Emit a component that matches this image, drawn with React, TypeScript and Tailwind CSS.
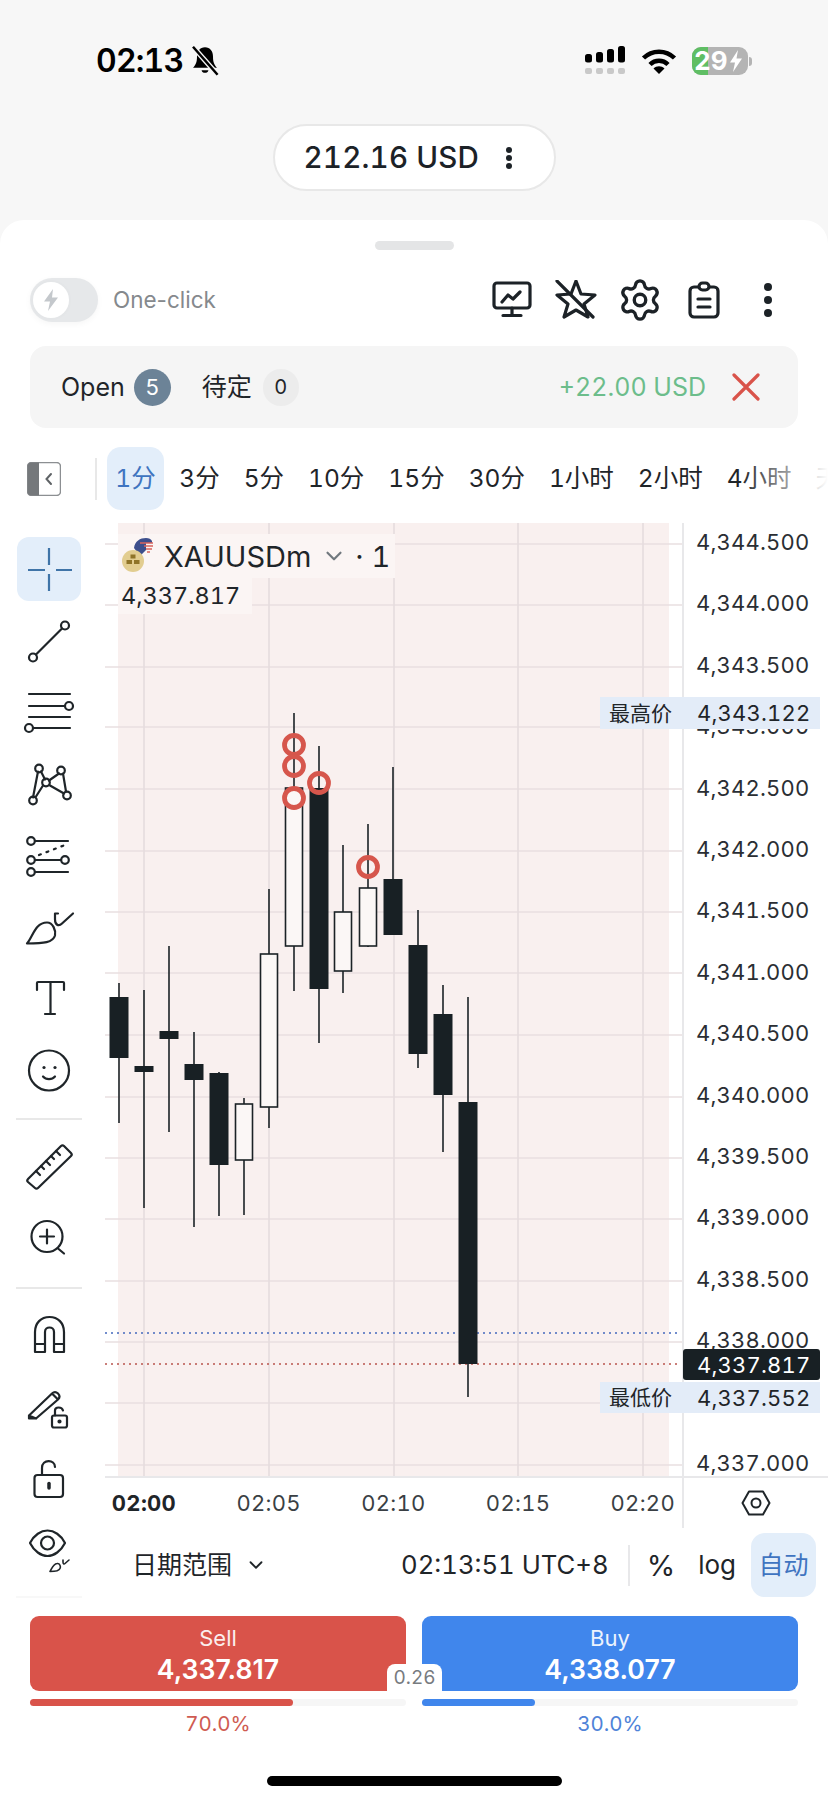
import React from "react";
import { Settings, ChevronDown } from "lucide-react";

const TICKS = ["4,344.500","4,344.000","4,343.500","4,343.000","4,342.500","4,342.000","4,341.500","4,341.000","4,340.500","4,340.000","4,339.500","4,339.000","4,338.500","4,338.000","4,337.500","4,337.000"];
const TABS = ["3分","5分","10分","15分","30分","1小时","2小时","4小时","天"];

type C = { x: number; wt: number; wb: number; bt: number; bb: number; s: boolean };
const CANDLES: C[] = [
  { x: 119, wt: 983, wb: 1123, bt: 997, bb: 1058, s: true },
  { x: 144, wt: 990, wb: 1208, bt: 1066, bb: 1072, s: true },
  { x: 169, wt: 946, wb: 1132, bt: 1031, bb: 1039, s: true },
  { x: 194, wt: 1032, wb: 1227, bt: 1064, bb: 1080, s: true },
  { x: 219, wt: 1072, wb: 1216, bt: 1073, bb: 1165, s: true },
  { x: 244, wt: 1098, wb: 1215, bt: 1104, bb: 1160, s: false },
  { x: 269, wt: 889, wb: 1128, bt: 954, bb: 1107, s: false },
  { x: 294, wt: 713, wb: 991, bt: 788, bb: 946, s: false },
  { x: 319, wt: 746, wb: 1043, bt: 788, bb: 989, s: true },
  { x: 343, wt: 845, wb: 993, bt: 912, bb: 971, s: false },
  { x: 368, wt: 824, wb: 947, bt: 888, bb: 946, s: false },
  { x: 393, wt: 767, wb: 935, bt: 879, bb: 935, s: true },
  { x: 418, wt: 910, wb: 1068, bt: 945, bb: 1054, s: true },
  { x: 443, wt: 985, wb: 1152, bt: 1014, bb: 1095, s: true },
  { x: 468, wt: 997, wb: 1397, bt: 1102, bb: 1364, s: true },
];
const HLINES = [544, 605, 667, 727, 789, 851, 912, 973, 1035, 1097, 1158, 1219, 1281, 1342, 1403, 1465];
const VLINES = [144, 269, 394, 518, 643];
const MARKS: [number, number][] = [[294, 745], [294, 766], [294, 798], [319, 783], [368, 867]];

function Chart() {
  return (
    <svg width="577" height="953" viewBox="105 523 577 953" className="block">
      <rect x="118" y="523" width="551" height="953" fill="#f9f0ef" />
      {HLINES.map((y) => <line key={y} x1="105" x2="682" y1={y} y2={y} stroke="#e8dfe0" strokeWidth="1.5" />)}
      {VLINES.map((x) => <line key={x} x1={x} x2={x} y1="523" y2="1476" stroke="#e5dcde" strokeWidth="1.6" />)}
      <line x1="105" x2="677" y1="1333" y2="1333" stroke="#4468bd" strokeWidth="1.4" strokeDasharray="2 4" />
      <line x1="105" x2="677" y1="1364" y2="1364" stroke="#b9544e" strokeWidth="1.4" strokeDasharray="2 4" />
      {CANDLES.map((c) => (
        <g key={c.x}>
          <line x1={c.x} x2={c.x} y1={c.wt} y2={c.wb} stroke="#1b2226" strokeWidth="1.6" />
          {c.s
            ? <rect x={c.x - 9.5} y={c.bt} width="19" height={c.bb - c.bt} fill="#182024" />
            : <rect x={c.x - 8.5} y={c.bt} width="17" height={c.bb - c.bt} fill="#fbf7f6" stroke="#1b2226" strokeWidth="1.6" />}
        </g>
      ))}
      {MARKS.map(([x, y]) => <circle key={`${x}-${y}`} cx={x} cy={y} r="9.5" fill="none" stroke="#d6564c" strokeWidth="4.8" />)}
    </svg>
  );
}

function Ico({ cy, children }: { cy: number; children: React.ReactNode }) {
  return (
    <svg width="64" height="64" viewBox={`17 ${cy - 32} 64 64`} fill="none" stroke="#1f2529" strokeWidth="2.2" strokeLinecap="round" strokeLinejoin="round" className="block overflow-visible">
      {children}
    </svg>
  );
}

function Slot({ children }: { children: React.ReactNode }) {
  return <div className="flex h-[71.5px] w-full items-center justify-center">{children}</div>;
}

function Sep() {
  return <div className="my-[12px] h-[2px] w-[66px] bg-[#e8e8e8]" />;
}

function Sidebar() {
  return (
    <div className="flex w-[98px] flex-col items-center pt-[10.5px]">
      <Slot>
        <div className="flex h-[64px] w-[64px] items-center justify-center rounded-[12px] bg-[#e3eefa]">
          <svg width="64" height="64" viewBox="17 537 64 64" fill="none" stroke="#3f74a8" strokeWidth="2.2" className="block">
            <path d="M49 548V565M49 574V591M28 570H45M56 570H72" />
          </svg>
        </div>
      </Slot>
      <Slot>
        <Ico cy={640.5}>
          <circle cx="33" cy="657" r="4" /><circle cx="65" cy="625" r="4" /><path d="M36 654L62 628" />
        </Ico>
      </Slot>
      <Slot>
        <Ico cy={712}>
          <path d="M29 694H70M29 706H65M29 717H70M33 728H70" /><circle cx="69" cy="706" r="4" /><circle cx="29" cy="728" r="4" />
        </Ico>
      </Slot>
      <Slot>
        <Ico cy={783.5}>
          <path d="M33 797L38 771M41 771L45 779M49 780L59 773M63 773L66 791M64 793L50 785M43 785L36 796" />
          <circle cx="39" cy="768" r="3.8" /><circle cx="61" cy="770" r="3.8" /><circle cx="46" cy="782" r="3.8" /><circle cx="33" cy="800" r="3.8" /><circle cx="67" cy="795" r="3.8" />
        </Ico>
      </Slot>
      <Slot>
        <Ico cy={855}>
          <path d="M35 841H68M35 860H61M35 872H68" /><circle cx="31" cy="841" r="3.8" /><circle cx="31" cy="860" r="3.8" /><circle cx="65" cy="860" r="3.8" /><circle cx="31" cy="872" r="3.8" />
          <path d="M39 855L65 845" strokeDasharray="2 6" />
        </Ico>
      </Slot>
      <Slot>
        <Ico cy={926.5}>
          <path d="M27 943C33 936 35 922 47 922C53 922 56 930 55 935C53 942 44 943 27 943Z" />
          <path d="M58 913H55V919C55 925 59 926 62 923L73 913" />
        </Ico>
      </Slot>
      <Slot>
        <Ico cy={998}>
          <path d="M37 990V983C37 982 37 982 38 982H63C64 982 64 982 64 983V990M50.5 982V1014M45 1014H55" />
        </Ico>
      </Slot>
      <Slot>
        <Ico cy={1069.5}>
          <circle cx="49" cy="1070" r="20" /><path d="M43 1076C46 1079.5 52 1079.5 55 1076" />
          <circle cx="44" cy="1067" r="1.6" fill="#1f2529" stroke="none" /><circle cx="55" cy="1067" r="1.6" fill="#1f2529" stroke="none" />
        </Ico>
      </Slot>
      <Sep />
      <Slot>
        <Ico cy={1166}>
          <path d="M28 1178L61 1145C62 1144 63 1144 64 1145L71 1152C72 1153 72 1154 71 1155L38 1187C37 1188 36 1188 35 1187L28 1181C27 1180 27 1179 28 1178Z" />
          <path d="M36 1170L40 1174M41 1165L44 1168M46 1160L50 1164M51 1155L54 1158M56 1150L60 1154" />
        </Ico>
      </Slot>
      <Slot>
        <Ico cy={1237.5}>
          <circle cx="47" cy="1235" r="15.5" /><path d="M58 1247L64 1252M47 1228V1242M40 1235H54" />
        </Ico>
      </Slot>
      <Sep />
      <Slot>
        <Ico cy={1334}>
          <path d="M35 1350V1330C35 1321 41 1315 49.5 1315C58 1315 64 1321 64 1330V1350H54V1330C54 1324 45 1324 45 1330V1350ZM35 1342H45M54 1342H64" />
        </Ico>
      </Slot>
      <Slot>
        <Ico cy={1405.5}>
          <path d="M29 1413L52 1391C54 1389 56 1389 58 1391C60 1393 60 1395 58 1397L36 1416H29ZM29 1413L36 1416M52 1391L58 1397" />
          <rect x="52" y="1413" width="15" height="12" rx="2" /><path d="M55 1413V1408C55 1404 62 1404 63 1408" /><circle cx="59.5" cy="1419" r="1" fill="#1f2529" />
        </Ico>
      </Slot>
      <Slot>
        <Ico cy={1477}>
          <rect x="34.5" y="1473" width="28.5" height="22" rx="3" /><path d="M42 1473V1466C42 1457 55 1457 55 1465" /><path d="M49 1481.5V1486" strokeWidth="3.5" />
        </Ico>
      </Slot>
      <Slot>
        <Ico cy={1548}>
          <path d="M30 1540C34 1532 41 1527.5 47.5 1527.5C54 1527.5 61 1532 65 1540C61 1548 54 1553 47.5 1553C41 1553 34 1548 30 1540Z" />
          <circle cx="47.5" cy="1540" r="6.5" />
          <path d="M50 1568.5C52 1565.5 53 1561 57 1560.5C60 1560 61 1564 60 1565.5C59 1568 56 1568.5 50 1568.5Z" strokeWidth="1.6" />
          <path d="M63 1557V1559C63 1561 64 1561.5 65 1560.5L69 1557" strokeWidth="1.6" />
        </Ico>
      </Slot>
      <div className="mt-[9px] h-[2px] w-[66px] bg-[#f8f8f8]" />
    </div>
  );
}

function PriceAxis() {
  return (
    <div className="h-[953px] flex-1 overflow-hidden border-l-2 border-[#e8e8ea]">
      <div className="-mt-[11.7px] flex flex-col pl-[12px]">
        {TICKS.map((t) => (
          <div key={t} className="flex h-[61.4px] shrink-0 items-center text-[22px] leading-none tracking-[0.2px] text-[#2a2e33]">{t}</div>
        ))}
      </div>
    </div>
  );
}

function Tag({ label, value, className }: { label: string; value: string; className: string }) {
  return (
    <div className={`absolute left-[495px] flex w-[220px] items-center bg-[#e3ecf8] text-[#1f2529] ${className}`}>
      <span className="ml-[9px] w-[88px] text-[21px] leading-none">{label}</span>
      <span className="text-[22px] leading-none tracking-[0.2px]">{value}</span>
    </div>
  );
}

function ChartPanel() {
  return (
    <div className="relative">
      <div className="flex h-[953px]">
        <div className="relative w-[577px]"><Chart /></div>
        <PriceAxis />
      </div>
      <div className="absolute left-[13px] top-[11px] flex h-[44px] w-[277px] items-center bg-[#fbf5f4]">
        <svg width="36" height="36" viewBox="0 0 36 36" className="ml-[2px] shrink-0">
          <path d="M14 10C15 3 20 0 26 0C29 0 31 1 32 3V5H26V12L20 18Z" fill="#3d4f8c" />
          <path d="M20 5H33M24 8H33M26 11H32M27 14H30" stroke="#d9645c" strokeWidth="1.3" />
          <circle cx="13" cy="23" r="11" fill="#e2cd90" />
          <rect x="10.5" y="16.5" width="5" height="4" fill="#8f7428" />
          <rect x="6.5" y="22" width="5.5" height="4" fill="#8f7428" />
          <rect x="14" y="22" width="5.5" height="4" fill="#8f7428" />
        </svg>
        <span className="ml-[8px] text-[29px] leading-none text-[#1f2529]">XAUUSDm</span>
        <ChevronDown size={26} strokeWidth={2} className="ml-[10px] text-[#71787e]" />
        <span className="ml-[8px] text-[29px] leading-none text-[#1f2529]">· 1</span>
      </div>
      <div className="absolute left-[13px] top-[55px] flex h-[36px] w-[134px] items-center bg-[#fbf5f4] pl-[3px] text-[23.5px] leading-none text-[#1f2529]">4,337.817</div>
      <Tag label="最高价" value="4,343.122" className="top-[174px] h-[32px]" />
      <div className="absolute left-[578px] top-[826px] flex h-[31px] w-[137px] items-center rounded-[3px] bg-[#182024] pl-[14px] text-[22px] leading-none tracking-[0.2px] text-white">4,337.817</div>
      <Tag label="最低价" value="4,337.552" className="top-[859px] h-[31px]" />
    </div>
  );
}

function TimeAxis() {
  return (
    <div className="flex h-[52px] border-t-2 border-[#e8e8ea]">
      <div className="-ml-[23.35px] flex w-[600.35px] items-center">
        {["02:00", "02:05", "02:10", "02:15", "02:20"].map((t, i) => (
          <div key={t} className={`w-[124.7px] shrink-0 text-center text-[22px] leading-none tracking-[0.3px] ${i === 0 ? "font-bold text-[#1f2529]" : "text-[#3a3f44]"}`}>{t}</div>
        ))}
      </div>
      <div className="flex flex-1 items-center justify-center border-l-2 border-[#e8e8ea]">
        <svg width="30" height="26" viewBox="0 0 30 26" fill="none" stroke="#1f2529" strokeWidth="2">
          <path d="M8 1.5H22L28.5 13L22 24.5H8L1.5 13Z" strokeLinejoin="round" /><circle cx="15" cy="13" r="4.5" />
        </svg>
      </div>
    </div>
  );
}

function BottomRow() {
  return (
    <div className="mt-[5px] flex h-[64px] items-center text-[#1f2529]">
      <span className="ml-[27px] text-[25px] leading-none">日期范围</span>
      <ChevronDown size={22} strokeWidth={2} className="ml-[13px]" />
      <span className="ml-auto text-[25.7px] leading-none">02:13:51 UTC+8</span>
      <div className="ml-[19px] h-[41px] w-[2px] bg-[#e8e8ea]" />
      <span className="ml-[17px] text-[29px] leading-none">%</span>
      <span className="ml-[23px] text-[26px] leading-none">log</span>
      <div className="ml-[15px] mr-[12px] flex h-[64px] w-[65px] items-center justify-center rounded-[14px] bg-[#e3eefa] text-[25px] leading-none text-[#3f74c0]">自动</div>
    </div>
  );
}

function TradeSide({ label, price, pct, fill, bar, bg, text }: { label: string; price: string; pct: string; fill: string; bar: string; bg: string; text: string }) {
  return (
    <div className="flex flex-col">
      <div className={`flex h-[75px] flex-col items-center rounded-[9px] pt-[9px] text-white ${bg}`}>
        <span className="text-[22px] leading-[26px] opacity-90">{label}</span>
        <span className="proportional-nums mt-[3px] text-[26.7px] font-semibold leading-[30px]">{price}</span>
      </div>
      <div className="mt-[8px] h-[7px] rounded-full bg-[#f6f6f6]">
        <div className={`h-full rounded-full ${bar} ${fill}`} />
      </div>
      <div className={`mt-[5px] text-center text-[20.5px] leading-[26px] ${text}`}>{pct}</div>
    </div>
  );
}

function StatusBar() {
  return (
    <div className="mt-[47px] flex h-[28px] items-center pl-[96px] pr-[76px]">
      <span className="text-[32px] font-semibold leading-none tracking-[-0.8px] text-black">02:13</span>
      <svg width="32" height="32" viewBox="0 0 28 28" className="ml-[6px]">
        <path d="M14 2C9.5 2 7 5.5 7 10C7 15 6 17 3.5 20H24.5C22 17 21 15 21 10C21 5.5 18.5 2 14 2ZM11 22C11.5 25 16.5 25 17 22Z" fill="#000" />
        <path d="M3 1L25 26" stroke="#f7f7f7" strokeWidth="4.5" />
        <path d="M3.5 1.5L25 26" stroke="#000" strokeWidth="2.2" />
      </svg>
      <div className="ml-auto flex items-center">
        <svg width="42" height="30" viewBox="0 0 42 30">
          <rect x="1" y="8" width="7" height="8.5" rx="2.5" fill="#000" />
          <rect x="12" y="6" width="7" height="10.5" rx="2.5" fill="#000" />
          <rect x="23" y="3" width="7" height="13.5" rx="2.5" fill="#000" />
          <rect x="34" y="0" width="7" height="16.5" rx="2.5" fill="#000" />
          <rect x="1" y="22" width="7" height="6" rx="2" fill="#c9c9c9" />
          <rect x="12" y="22" width="7" height="6" rx="2" fill="#c9c9c9" />
          <rect x="23" y="22" width="7" height="6" rx="2" fill="#c9c9c9" />
          <rect x="34" y="22" width="7" height="6" rx="2" fill="#c9c9c9" />
        </svg>
        <svg width="36" height="27" viewBox="0 0 36 27" className="ml-[15px]" fill="none" stroke="#000" strokeWidth="4.5">
          <path d="M2.5 10C11 1.5 25 1.5 33.5 10" />
          <path d="M9 16.5C14 11.5 22 11.5 27 16.5" />
          <path d="M18 26L12.5 20.5C15.5 17.5 20.5 17.5 23.5 20.5Z" fill="#000" stroke="none" />
        </svg>
        <div className="relative ml-[15px] flex h-[28px] w-[56px] items-center rounded-[9px] bg-[#b4b4b4] pl-[2px] text-[26px] font-bold leading-none text-white">
          <div className="absolute inset-y-0 left-0 w-[16px] rounded-l-[9px] bg-[#5fbe64]" />
          <span className="relative">29</span>
          <svg width="14" height="22" viewBox="0 0 14 22" className="relative ml-[1px]"><path d="M9 0L1 12.5H6L4 22L13 8.5H7.5Z" fill="#fff" /></svg>
        </div>
        <div className="ml-[1px] h-[9px] w-[3px] rounded-r-full bg-[#b4b4b4]" />
      </div>
    </div>
  );
}

export default function App() {
  return (
    <div className="flex h-[1800px] w-[828px] flex-col overflow-hidden bg-[#f7f7f7] font-[Inter,'Noto_Sans_CJK_SC',sans-serif] tabular-nums">
      <div className="h-[220px] shrink-0">
        <StatusBar />
        <div className="mx-auto mt-[49px] flex h-[67px] w-[283px] items-center rounded-full border-2 border-[#e8e8e8] bg-white pl-[29px] pr-[41px]">
          <span className="text-[29.5px] font-medium leading-none tracking-[0.2px] text-[#1c2227]">212.16 USD</span>
          <svg width="8" height="24" viewBox="0 0 8 24" className="ml-auto" fill="#1c2227">
            <circle cx="4" cy="4" r="3" /><circle cx="4" cy="12" r="3" /><circle cx="4" cy="20" r="3" />
          </svg>
        </div>
      </div>

      <div className="flex flex-1 flex-col rounded-t-[24px] bg-white pt-[21px]">
        <div className="mx-auto h-[9px] w-[79px] rounded-full bg-[#e4e5e6]" />

        <div className="mt-[28px] flex h-[44px] items-center pl-[30px] pr-[56px]">
          <div className="flex h-[44px] w-[68px] items-center rounded-full bg-[#e6e8ea] shadow-[0_2px_6px_rgba(0,0,0,0.04)]">
            <div className="ml-[1px] flex h-[40px] w-[40px] items-center justify-center rounded-full border-2 border-[#e4e6e8] bg-white">
              <svg width="16" height="22" viewBox="0 0 16 22"><path d="M10 0L1 12.5H7L5 22L15 8.5H9Z" fill="#c4c8cc" /></svg>
            </div>
          </div>
          <span className="proportional-nums ml-[15px] text-[22.5px] leading-none text-[#85898d]">One-click</span>
          <svg width="40" height="38" viewBox="492 282 40 38" fill="none" stroke="#1c2227" strokeWidth="3.2" strokeLinecap="round" strokeLinejoin="round" className="ml-auto">
            <rect x="494" y="284" width="36" height="25" rx="3" />
            <path d="M502 303L508 296L513 300L520 293M512 309V316M503 316.5H521" />
          </svg>
          <svg width="42" height="40" viewBox="555 280 42 40" fill="none" stroke="#1c2227" strokeWidth="3.2" strokeLinecap="round" strokeLinejoin="round" className="ml-[23px]">
            <path d="M576 281L581 294L595 295L584 304L588 317L576 310L564 317L568 304L557 295L571 294Z" />
            <path d="M557 281L593 317" />
          </svg>
          <Settings size={46} strokeWidth={1.75} className="ml-[20px] text-[#1c2227]" />
          <svg width="32" height="38" viewBox="688 281 32 38" fill="none" stroke="#1c2227" strokeWidth="3.2" strokeLinecap="round" strokeLinejoin="round" className="ml-[25px]">
            <rect x="690" y="287" width="28" height="30" rx="4" />
            <rect x="699" y="283" width="10" height="7" rx="3.5" fill="#fff" />
            <path d="M698 299H710M698 307H710" />
          </svg>
          <svg width="8" height="36" viewBox="0 0 8 36" fill="#1c2227" className="ml-[44px]">
            <circle cx="4" cy="5" r="4" /><circle cx="4" cy="18" r="4" /><circle cx="4" cy="31" r="4" />
          </svg>
        </div>

        <div className="mx-[30px] mt-[24px] flex h-[82px] items-center rounded-[16px] bg-[#f5f5f5] pl-[31px] pr-[38px] text-[25px] leading-none">
          <span className="text-[#1f2529]">Open</span>
          <div className="ml-[9px] flex h-[37px] w-[37px] items-center justify-center rounded-full bg-[#6c8397] text-[22px] text-white">5</div>
          <span className="ml-[31px] text-[#1f2529]">待定</span>
          <div className="ml-[11px] flex h-[37px] w-[36px] items-center justify-center rounded-full bg-[#ececec] text-[20px] text-[#1f2529]">0</div>
          <span className="ml-auto text-[#6cbd8b]">+22.00 USD</span>
          <svg width="28" height="28" viewBox="0 0 28 28" fill="none" stroke="#d9534a" strokeWidth="3.2" strokeLinecap="round" className="ml-[26px]">
            <path d="M2 2L26 26M26 2L2 26" />
          </svg>
        </div>

        <div className="relative mt-[19px] flex h-[63px] items-center overflow-hidden">
          <svg width="34" height="34" viewBox="0 0 34 34" fill="none" className="ml-[27px] shrink-0">
            <rect x="0.5" y="0.5" width="33" height="33" rx="4" fill="#fff" stroke="#8c8f92" strokeWidth="1.5" />
            <path d="M4.5 0.5H12V33.5H4.5C2 33.5 0.5 32 0.5 29.5V4.5C0.5 2 2 0.5 4.5 0.5Z" fill="#75787b" />
            <path d="M24 12L19.5 17L24 22" stroke="#5f6366" strokeWidth="2" strokeLinecap="round" />
          </svg>
          <div className="ml-[34px] h-[42px] w-[2px] shrink-0 bg-[#e8e8e8]" />
          <div className="ml-[10px] mr-[3.3px] flex h-[63px] w-[57px] shrink-0 items-center justify-center rounded-[14px] bg-[#e3eefa] text-[24.5px] leading-none text-[#3f74c0]">1分</div>
          {TABS.map((t) => (
            <div key={t} className="shrink-0 px-[12px] text-[24.5px] leading-none text-[#1f2529]">{t}</div>
          ))}
          <div className="absolute inset-y-0 right-0 w-[88px] bg-gradient-to-r from-white/0 to-white" />
        </div>

        <div className="mt-[13px] flex">
          <Sidebar />
          <div className="ml-[7px] flex flex-1 flex-col">
            <ChartPanel />
            <TimeAxis />
            <BottomRow />
          </div>
        </div>

        <div className="relative mx-[30px] mt-[18px] grid grid-cols-2 gap-x-[16px]">
          <TradeSide label="Sell" price="4,337.817" pct="70.0%" fill="w-[70%]" bar="bg-[#d9534a]" bg="bg-[#d9534a]" text="text-[#cf5b52]" />
          <TradeSide label="Buy" price="4,338.077" pct="30.0%" fill="w-[30%]" bar="bg-[#4086ec]" bg="bg-[#4086ec]" text="text-[#4f83d8]" />
          <div className="absolute left-[357px] top-[48px] flex h-[27px] w-[55px] items-center justify-center rounded-t-[8px] bg-white text-[19px] leading-none text-[#777b7f]">0.26</div>
        </div>

        <div className="mx-auto mt-[39px] h-[10px] w-[295px] rounded-full bg-black" />
      </div>
    </div>
  );
}
